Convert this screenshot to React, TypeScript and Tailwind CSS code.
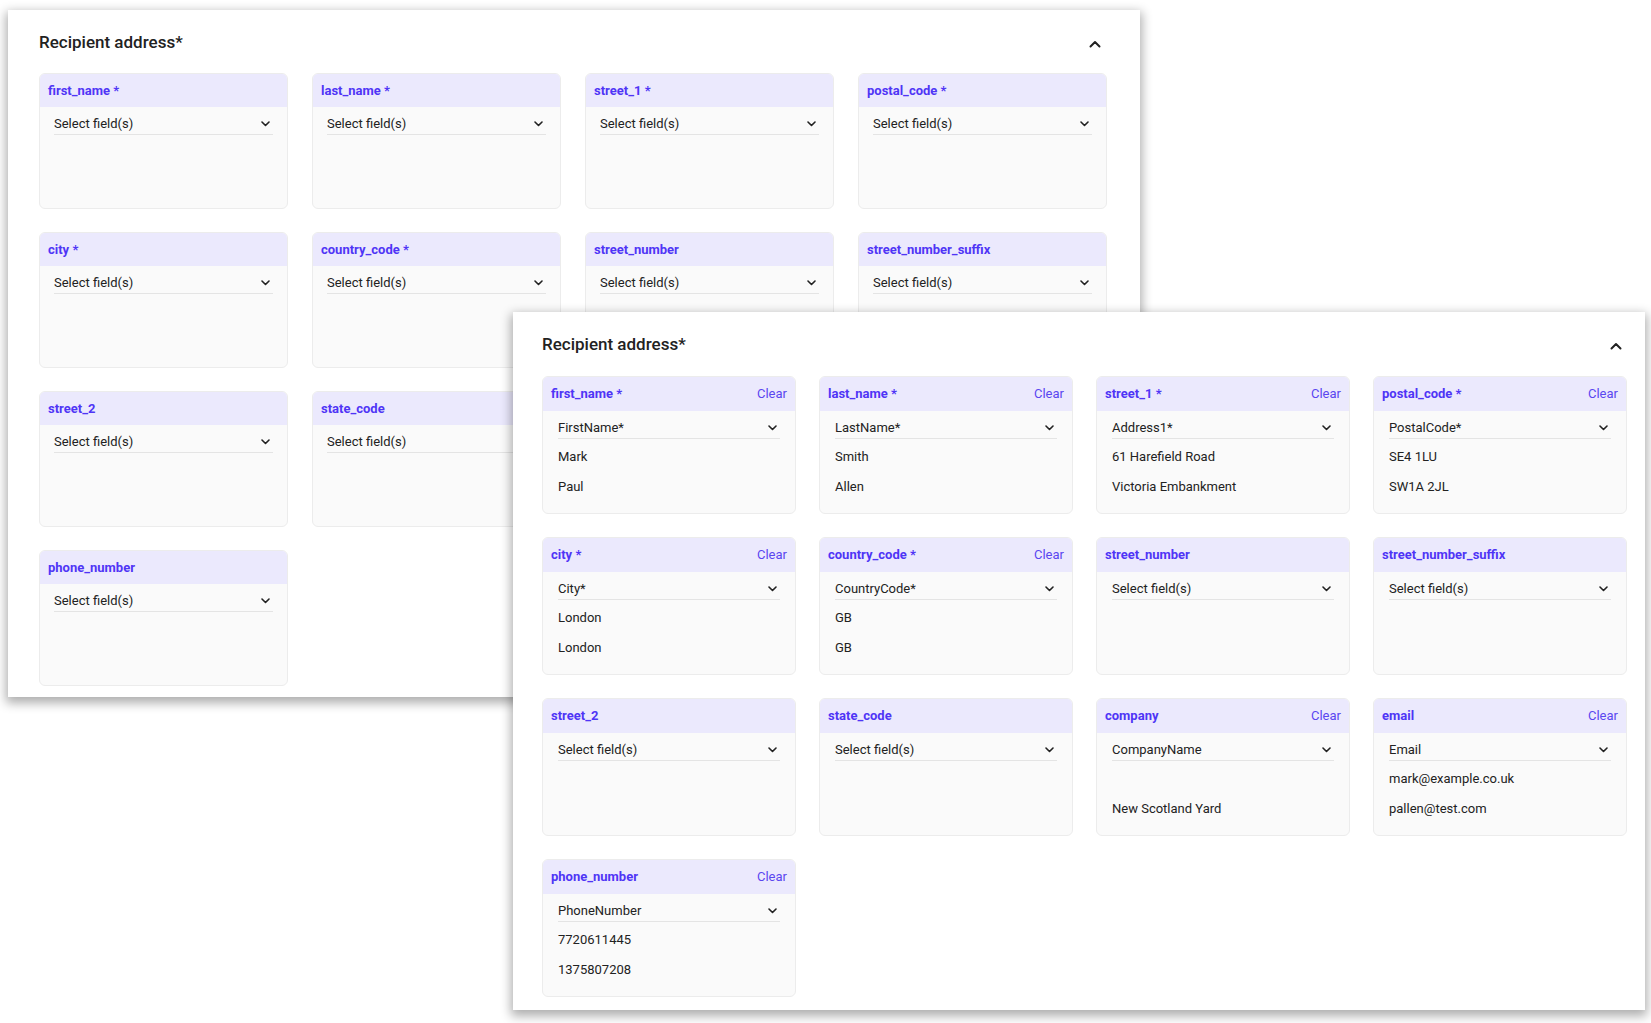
import React from "react";

type Field = {
  label: string;
  selected?: string;
  values?: string[];
};

const fields: Field[] = [
  { label: "first_name *", selected: "FirstName*", values: ["Mark", "Paul"] },
  { label: "last_name *", selected: "LastName*", values: ["Smith", "Allen"] },
  { label: "street_1 *", selected: "Address1*", values: ["61 Harefield Road", "Victoria Embankment"] },
  { label: "postal_code *", selected: "PostalCode*", values: ["SE4 1LU", "SW1A 2JL"] },
  { label: "city *", selected: "City*", values: ["London", "London"] },
  { label: "country_code *", selected: "CountryCode*", values: ["GB", "GB"] },
  { label: "street_number" },
  { label: "street_number_suffix" },
  { label: "street_2" },
  { label: "state_code" },
  { label: "company", selected: "CompanyName", values: ["", "New Scotland Yard"] },
  { label: "email", selected: "Email", values: ["mark@example.co.uk", "pallen@test.com"] },
  { label: "phone_number", selected: "PhoneNumber", values: ["7720611445", "1375807208"] },
];

// the older screenshot had nothing mapped yet
const emptyFields: Field[] = fields.map((f) => ({ label: f.label }));

function ChevronDown() {
  return (
    <svg width="9" height="6" viewBox="0 0 9 6" fill="none" className="shrink-0">
      <polyline points="1,1 4.5,4.5 8,1" stroke="#222" strokeWidth="1.6" strokeLinecap="round" strokeLinejoin="round" />
    </svg>
  );
}

function ChevronUp() {
  return (
    <svg width="12" height="8" viewBox="0 0 12 8" fill="none">
      <polyline points="1.5,6.5 6,2 10.5,6.5" stroke="#222" strokeWidth="2" strokeLinecap="round" strokeLinejoin="round" />
    </svg>
  );
}

function FieldCard({ field, compact }: { field: Field; compact?: boolean }) {
  const hasValue = !!field.selected;
  return (
    <div
      className={`flex flex-col overflow-hidden rounded-md border border-[#ececec] bg-[#fafafa] ${
        compact ? "h-[136px]" : "h-[138px]"
      }`}
    >
      <div
        className={`flex shrink-0 items-center justify-between bg-[#ebe9fd] px-2 ${
          compact ? "h-[33px]" : "h-[34px]"
        }`}
      >
        <span className="text-[13px] font-bold text-[#4f35f6]">{field.label}</span>
        {hasValue && <span className="text-[13px] text-[#5a47f0]">Clear</span>}
      </div>
      <div className={compact ? "px-[14px]" : "px-[15px]"}>
        <div className="flex h-7 items-end justify-between border-b border-[#e4e4e4] pb-[1px]">
          <span className="text-[13px] leading-[18px] text-[#222]">
            {field.selected ?? "Select field(s)"}
          </span>
          <span className="mb-[6px] mr-[3px] flex">
            <ChevronDown />
          </span>
        </div>
        <div className="mt-[3px]">
          {(field.values ?? []).map((v, i) => (
            <div key={i} className="flex h-[30px] items-center text-[13px] text-[#222]">
              {v}
            </div>
          ))}
        </div>
      </div>
    </div>
  );
}

function Panel({
  items,
  compact,
  className,
}: {
  items: Field[];
  compact?: boolean;
  className: string;
}) {
  return (
    <div className={`absolute bg-white shadow-[0_4px_10px_2px_rgba(0,0,0,0.32)] ${className}`}>
      <div className={compact ? "w-fit pl-[31px] pt-[21px]" : "w-fit pl-[29px] pt-[21px]"}>
        <div className="flex h-6 items-center justify-between">
          <h2 className="text-[17px] font-medium text-[#222]">Recipient address*</h2>
          <span className={compact ? "mr-[6px] mt-[1px] flex" : "mr-[5px] mt-[1px] flex"}>
            <ChevronUp />
          </span>
        </div>
        <div
          className={
            compact
              ? "mt-[18px] grid grid-cols-[repeat(4,249px)] gap-x-[24px] gap-y-[23px]"
              : "mt-[19px] grid grid-cols-[repeat(4,254px)] gap-x-[23px] gap-y-[23px]"
          }
        >
          {items.map((f) => (
            <FieldCard key={f.label} field={f} compact={compact} />
          ))}
        </div>
      </div>
    </div>
  );
}

export default function App() {
  return (
    <div
      className="relative h-[1023px] w-[1651px] overflow-hidden bg-white"
      style={{ fontFamily: "Roboto, 'Liberation Sans', sans-serif" }}
    >
      <Panel items={emptyFields} compact className="left-[8px] top-[10px] h-[687px] w-[1132px]" />
      <Panel items={fields} className="left-[513px] top-[312px] h-[698px] w-[1132px]" />
    </div>
  );
}
